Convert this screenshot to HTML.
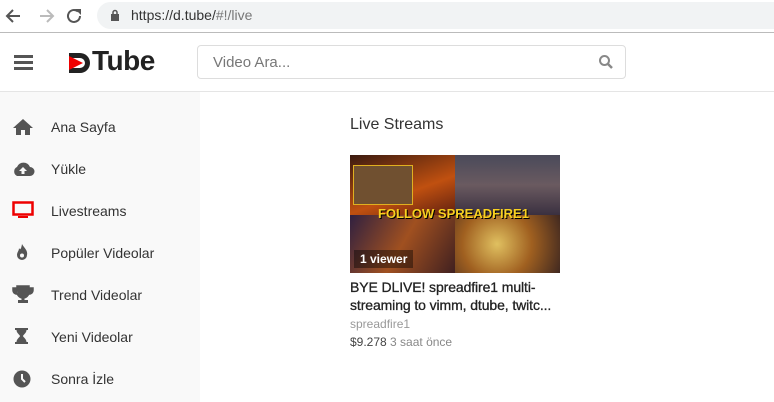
<!DOCTYPE html>
<html><head><meta charset="utf-8"><style>
*{margin:0;padding:0;box-sizing:border-box}
body{width:774px;height:402px;overflow:hidden;background:#fff;font-family:"Liberation Sans",sans-serif;position:relative;color:#333}
.abs{position:absolute}
.url{left:97px;top:2px;width:690px;height:27px;background:#f1f3f4;border-radius:14px}
.side{left:0;top:92px;width:200px;height:310px;background:#f9f9f9}
.item{position:absolute;left:51px;font-size:14px;color:#333}
</style></head><body>
<div class="abs" style="left:0;top:0;width:774px;height:33px;background:#fff;border-bottom:1px solid #bbb"></div>
<svg class="abs" style="left:4px;top:6px" width="80" height="20" viewBox="0 0 80 20">
<path d="M16 10H4M9 4L3 10L9 16" stroke="#555" stroke-width="2" fill="none"/>
<path d="M36 10H48M43 4L49 10L43 16" stroke="#bbb" stroke-width="2" fill="none"/>
<path d="M76 10A6 6 0 1 1 74 5.5" stroke="#555" stroke-width="2" fill="none"/><path d="M71 3H77V9Z" fill="#555"/>
</svg>
<div class="abs url"></div>
<svg class="abs" style="left:110px;top:9px" width="10" height="12"><rect x="1" y="5" width="8" height="7" fill="#555"/><path d="M3 5V3.5a2 2 0 0 1 4 0V5" stroke="#555" stroke-width="1.5" fill="none"/></svg>
<div class="abs" style="left:131px;top:7px;font-size:14px;color:#333">https://d.tube/<span style="color:#777">#!/live</span></div>
<div class="abs" style="left:0;top:91px;width:774px;height:1px;background:#e5e5e5"></div>
<div class="abs" style="left:14px;top:55px;width:19px;height:3px;background:#555;box-shadow:0 6px 0 #555,0 12px 0 #555"></div>
<svg class="abs" style="left:67px;top:51px" width="26" height="24"><path d="M2 2H13A10 10 0 0 1 13 22H2V17H13A5 5 0 0 0 13 7H2Z" fill="#222"/><path d="M2 5L16 12L2 19Z" fill="#e00"/></svg>
<div class="abs" style="left:92px;top:45px;font-size:28px;font-weight:bold;color:#222;letter-spacing:-0.5px">Tube</div>
<div class="abs" style="left:197px;top:45px;width:429px;height:34px;border:1px solid #ddd;border-radius:4px"></div>
<div class="abs" style="left:213px;top:54px;font-size:15px;color:#777">Video Ara...</div>
<svg class="abs" style="left:598px;top:54px" width="16" height="16"><circle cx="6.5" cy="6.5" r="4.5" stroke="#888" stroke-width="2" fill="none"/><path d="M10 10L14 14" stroke="#888" stroke-width="2.5"/></svg>
<div class="abs side"></div>
<svg class="abs" style="left:12px;top:117px" width="22" height="20"><path d="M11 2L1 11H4V18H9V13H13V18H18V11H21Z" fill="#555"/></svg>
<div class="item" style="top:119px">Ana Sayfa</div>
<svg class="abs" style="left:11px;top:160px" width="24" height="18"><path d="M6 16A5 5 0 0 1 6 7A7 7 0 0 1 19 7A4.5 4.5 0 0 1 19 16Z" fill="#555"/><path d="M12 7L8 11H10.5V14H13.5V11H16Z" fill="#f9f9f9"/></svg>
<div class="item" style="top:161px">Yükle</div>
<svg class="abs" style="left:12px;top:201px" width="22" height="18"><rect x="1.5" y="1.5" width="19" height="12" stroke="#e00" stroke-width="2.5" fill="none"/><rect x="6" y="15" width="10" height="2" fill="#e00"/></svg>
<div class="item" style="top:203px">Livestreams</div>
<svg class="abs" style="left:13px;top:243px" width="18" height="18"><path d="M9 1C11 5 15 7 14 12A5 5 0 0 1 4 12C4 9 6 8 6 5C7 7 8 7 9 1Z" fill="#555"/><circle cx="9" cy="12.5" r="2" fill="#f9f9f9"/></svg>
<div class="item" style="top:245px">Popüler Videolar</div>
<svg class="abs" style="left:12px;top:285px" width="22" height="18"><path d="M5 1H17V7A6 6 0 0 1 5 7Z M5 3H1V5A4 4 0 0 0 6 9 M17 3H21V5A4 4 0 0 1 16 9" fill="#555" stroke="#555" stroke-width="1.5"/><rect x="9.5" y="11" width="3" height="4" fill="#555"/><rect x="6" y="15" width="10" height="3" fill="#555"/></svg>
<div class="item" style="top:287px">Trend Videolar</div>
<svg class="abs" style="left:14px;top:327px" width="16" height="18"><path d="M1 1H14V3H12.5C12.5 6 9 8 9 9C9 10 12.5 12 12.5 15H14V17H1V15H2.5C2.5 12 6 10 6 9C6 8 2.5 6 2.5 3H1Z" fill="#555"/></svg>
<div class="item" style="top:329px">Yeni Videolar</div>
<svg class="abs" style="left:12px;top:369px" width="20" height="20"><circle cx="10" cy="10" r="8.5" fill="#555"/><path d="M10 5V10L13 13" stroke="#f9f9f9" stroke-width="2" fill="none"/></svg>
<div class="item" style="top:371px">Sonra İzle</div>
<div class="abs" style="left:350px;top:116px;font-size:16px;color:#333">Live Streams</div>
<div class="abs" style="left:350px;top:155px;width:210px;height:118px;overflow:hidden;background:linear-gradient(135deg,#5a1a10 0%,#b04010 30%,#3a2a40 50%,#d08020 70%,#6a4020 100%)">
<div class="abs" style="left:0;top:0;width:105px;height:60px;background:linear-gradient(160deg,#3a1a10,#c05010 60%,#602010)"></div>
<div class="abs" style="left:105px;top:0;width:105px;height:60px;background:linear-gradient(180deg,#4a4a5a,#6a5a60 50%,#3a3040)"></div>
<div class="abs" style="left:3px;top:10px;width:60px;height:40px;border:1px solid #e0b020;background:#705030"></div>
<div class="abs" style="left:105px;top:60px;width:105px;height:58px;background:radial-gradient(circle at 40% 50%,#e0c060,#a06020 50%,#402820)"></div>
<div class="abs" style="left:0;top:60px;width:105px;height:58px;background:linear-gradient(120deg,#302040,#a05020,#402020)"></div>
<div class="abs" style="left:28px;top:51px;font-size:13px;font-weight:bold;color:#f8d020;text-shadow:1px 1px 0 #000">FOLLOW SPREADFIRE1</div>
<div class="abs" style="left:4px;top:95px;padding:2px 6px;background:rgba(0,0,0,.4);color:#fff;font-size:12px;font-weight:bold">1 viewer</div>
</div>
<div class="abs" style="left:350px;top:278px;font-size:14px;color:#222;line-height:18px;white-space:nowrap;letter-spacing:-0.1px;-webkit-text-stroke:0.3px #222">BYE DLIVE! spreadfire1 multi-<br>streaming to vimm, dtube, twitc...</div>
<div class="abs" style="left:350px;top:317px;font-size:12px;color:#999">spreadfire1</div>
<div class="abs" style="left:350px;top:335px;font-size:12px;color:#444">$9.278 <span style="color:#888">3 saat önce</span></div>
</body></html>
